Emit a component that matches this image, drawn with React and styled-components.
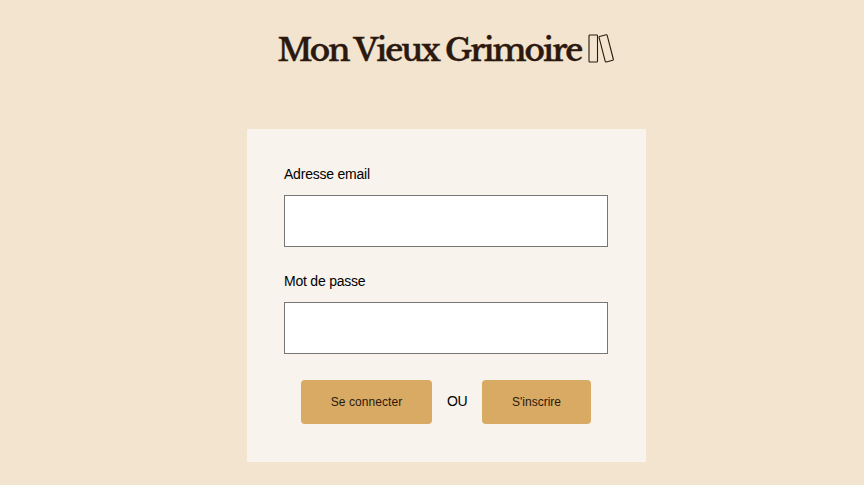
import React from 'react';
import styled, { createGlobalStyle } from 'styled-components';

const GlobalStyle = createGlobalStyle`
  * { box-sizing: border-box; }
  body { margin: 0; background: #f2e4ce; }
`;

const Page = styled.div`
  display: flex;
  flex-direction: column;
  align-items: center;
  width: 100%;
  height: 485px;
  padding-left: 29px;
  overflow: hidden;
  background: #f2e4ce;
  color: #000;
  font-family: "Liberation Sans", Arial, sans-serif;
`;

const Header = styled.header`
  display: flex;
  align-items: center;
  width: 338px;
  height: 129px;
  padding-bottom: 32px;
`;

const Title = styled.h1`
  width: 310px;
  margin: 0;
  padding-top: 2px;
  color: #2b190f;
  font: 600 31px/40px "Libre Baskerville", "Liberation Serif", serif;
  letter-spacing: -1.92px;
  -webkit-text-stroke: 0.35px #2b190f;
  white-space: nowrap;
`;

const Logo = styled.svg`
  flex: none;
  width: 27px;
  height: 30px;
`;

const Form = styled.form`
  width: 399px;
  height: 333px;
  padding: 36px 38px 38px 37px;
  background: #f8f3ec;
`;

const Field = styled.label`
  display: flex;
  flex-direction: column;
  height: 107px;
  font-size: 14px;
  line-height: 18px;
  letter-spacing: -0.22px;
`;

const Input = styled.input`
  width: 324px;
  height: 52px;
  margin: 12px 0 0;
  padding: 0 12px;
  border: 1px solid #767676;
  background: #fff;
`;

const Actions = styled.div`
  display: flex;
  align-items: center;
  justify-content: center;
  gap: 15px;
  margin-top: 1px;
  font-size: 14px;
`;

const Separator = styled.span`
  width: 20px;
  padding-bottom: 2px;
  letter-spacing: -0.4px;
`;

const Button = styled.button`
  width: ${({ $width }) => $width};
  height: 44px;
  padding: 0;
  border: 0;
  border-radius: 4px;
  background: #d8aa63;
  color: #2b190f;
  font: 12px "Liberation Sans", Arial, sans-serif;
  letter-spacing: ${({ $tracking }) => $tracking || 'normal'};
`;

export default function App() {
  return (
    <>
      <GlobalStyle />
      <Page>
        <Header>
          <Title>Mon Vieux Grimoire</Title>
          <Logo viewBox="0 0 27 30" fill="none" stroke="#2b190f" strokeWidth="1.1" aria-hidden="true">
            <rect x="1" y="1" width="8.5" height="27" rx="0.8" />
            <rect x="14" y="1.2" width="8.4" height="26.3" rx="0.8" transform="rotate(-14.5 18.2 14.35)" />
          </Logo>
        </Header>
        <Form>
          <Field>Adresse email<Input type="email" /></Field>
          <Field>Mot de passe<Input type="password" /></Field>
          <Actions>
            <Button type="button" $width="131px" $tracking="0.06px">Se connecter</Button>
            <Separator>OU</Separator>
            <Button type="button" $width="109px">S'inscrire</Button>
          </Actions>
        </Form>
      </Page>
    </>
  );
}
